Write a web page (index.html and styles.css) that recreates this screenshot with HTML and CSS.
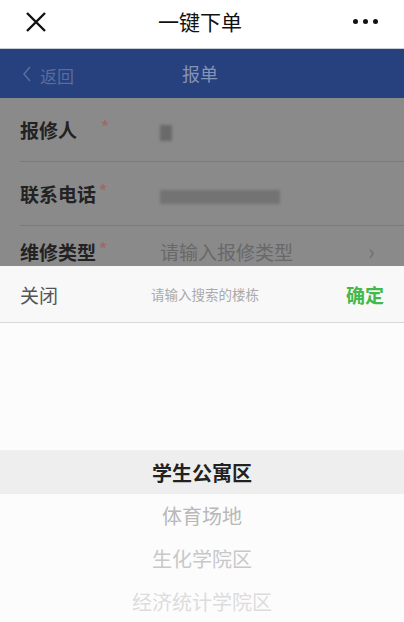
FILE: index.html
```html
<!DOCTYPE html>
<html lang="zh-CN">
<head>
  <meta charset="UTF-8" />
  <meta name="viewport" content="width=device-width, initial-scale=1.0" />
  <title>一键下单</title>
  <link rel="stylesheet" href="styles.css">
</head>
<body>
  <!-- WeChat style top bar -->
  <div class="top-bar">
    <svg class="close-icon" width="22" height="22" viewBox="0 0 22 22">
      <path d="M2 2 L20 20 M20 2 L2 20" stroke="#111" stroke-width="2.4" fill="none"/>
    </svg>
    <div class="top-title">一键下单</div>
    <div class="more-dots"><span></span><span></span><span></span></div>
  </div>

  <!-- Page header (dimmed) -->
  <div class="page-header">
    <div class="back">
      <svg width="10" height="18" viewBox="0 0 10 18">
        <path d="M8 2 L2 9 L8 16" stroke="#586d9c" stroke-width="1.6" fill="none"/>
      </svg>
      <span>返回</span>
    </div>
    <div class="page-title">报单</div>
  </div>

  <!-- Form (under mask) -->
  <div class="form">
    <div class="form-row">
      <div class="label">报修人<i>*</i></div>
      <div class="value"><span class="blur blur-short"></span></div>
    </div>
    <div class="form-row">
      <div class="label">联系电话<i>*</i></div>
      <div class="value"><span class="blur blur-long"></span></div>
    </div>
    <div class="form-row form-row-cut">
      <div class="label">维修类型<i>*</i></div>
      <div class="value placeholder">请输入报修类型</div>
      <div class="arrow">›</div>
    </div>
  </div>

  <!-- Picker panel -->
  <div class="picker">
    <div class="picker-head">
      <div class="picker-close">关闭</div>
      <div class="picker-search">请输入搜索的楼栋</div>
      <div class="picker-ok">确定</div>
    </div>
    <div class="picker-body">
      <div class="picker-spacer"></div>
      <div class="picker-item selected">学生公寓区</div>
      <div class="picker-item fade-1">体育场地</div>
      <div class="picker-item fade-2">生化学院区</div>
      <div class="picker-item fade-3">经济统计学院区</div>
    </div>
  </div>
</body>
</html>
```

FILE: styles.css
```css
body {
  margin: 0;
  font-family: "Noto Sans CJK SC", "Noto Sans", sans-serif;
  background-color: #fafafa;
  width: 404px;
  height: 622px;
  overflow: hidden;
}
/* Top bar */
.top-bar {
  height: 48px;
  background: #ffffff;
  display: flex;
  align-items: center;
  justify-content: space-between;
  padding: 0 26px 0 25px;
  border-bottom: 1px solid #c9ced8;
}
.close-icon {
  margin-top: -4px;
}
.top-title {
  font-size: 21px;
  color: #111;
  margin-top: -6px;
}
.more-dots {
  display: flex;
  gap: 5px;
  margin-top: -6px;
}
.more-dots span {
  width: 5px;
  height: 5px;
  border-radius: 50%;
  background: #111;
}
/* Dimmed blue header */
.page-header {
  height: 49px;
  background: #27407e;
  position: relative;
  display: flex;
  align-items: center;
  padding-left: 22px;
}
.back {
  display: flex;
  align-items: center;
  gap: 8px;
  color: #586d9c;
  font-size: 17px;
}
.back span {
  margin-top: 3px;
}
.page-title {
  position: absolute;
  left: 0;
  right: 4px;
  text-align: center;
  color: #8494b6;
  font-size: 18px;
  top: 11px;
}
/* Form under mask */
.form {
  background: #8a8a8a;
  padding-left: 20px;
}
.form-row {
  height: 63px;
  display: flex;
  align-items: center;
  border-bottom: 1px solid #7b7b7b;
}
.form-row-cut {
  height: 40px;
  border-bottom: none;
  align-items: flex-start;
  padding-top: 12px;
  box-sizing: border-box;
  overflow: hidden;
}
.label {
  width: 140px;
  font-size: 19px;
  font-weight: bold;
  color: #222;
  position: relative;
}
.label i {
  font-style: normal;
  color: #9c6a6a;
  font-size: 16px;
  position: relative;
  top: -5px;
  margin-left: 3px;
}
.form-row:first-child .label i {
  margin-left: 24px;
}
.value {
  flex: 1;
  font-size: 19px;
}
.placeholder {
  color: #686868;
}
.blur {
  display: inline-block;
  height: 14px;
  background: #6a6a6a;
  filter: blur(1.5px);
  vertical-align: middle;
}
.blur-short {
  width: 12px;
  height: 16px;
}
.blur-long {
  width: 120px;
  opacity: 0.7;
}
.arrow {
  width: 36px;
  color: #707070;
  font-size: 22px;
  line-height: 24px;
}
/* Picker */
.picker {
  background: #fafafa;
}
.picker-head {
  height: 56px;
  background: #f8f8f8;
  display: flex;
  align-items: center;
  justify-content: space-between;
  padding: 0 20px;
  border-bottom: 1px solid #d8d8d8;
}
.picker-close {
  font-size: 19px;
  color: #555;
}
.picker-search {
  font-size: 13.5px;
  color: #aaa;
  margin-left: 6px;
}
.picker-ok {
  font-size: 19px;
  font-weight: bold;
  color: #43b84b;
}
.picker-body {
  background: #fcfcfc;
}
.picker-spacer {
  height: 127px;
  border-bottom: 1px solid #f0f0f0;
}
.picker-item {
  height: 43px;
  line-height: 43px;
  text-align: center;
  font-size: 20px;
  color: #ccc;
}
.picker-item.selected {
  background: #eeeeee;
  color: #222;
  font-weight: bold;
}
.picker-item.fade-1 {
  color: #b8b8b8;
}
.picker-item.fade-2 {
  color: #c8c8c8;
}
.picker-item.fade-3 {
  color: #dcdcdc;
}
```
